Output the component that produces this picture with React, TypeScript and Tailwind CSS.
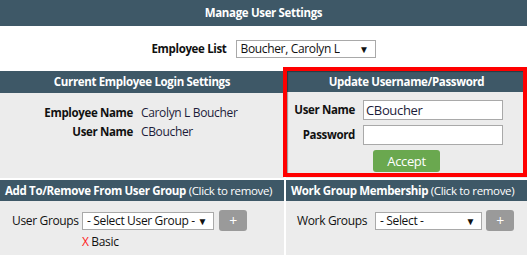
import { useState } from "react";

function FakeSelect({ value, width }: { value: string; width: string }) {
  return (
    <div
      className={`${width} h-[18px] bg-white border border-[#a9a9a9] flex items-center justify-between pl-[4px] pr-[6px] text-[12px] text-[#111]`}
    >
      <span className="truncate">{value}</span>
      <span className="text-[10px] leading-none">▼</span>
    </div>
  );
}

function PlusButton() {
  return (
    <button className="w-[28px] h-[21px] rounded-[3px] bg-[#9a9a9a] text-white text-[14px] leading-none flex items-center justify-center">
      +
    </button>
  );
}

export default function App() {
  const [userName, setUserName] = useState("CBoucher");
  const [password, setPassword] = useState("");

  return (
    <div className="w-[527px] h-[255px] overflow-hidden bg-white font-['Open_Sans',sans-serif] text-[11.5px] text-[#111] tracking-[-0.03em]">
      {/* Page title */}
      <div className="h-[26px] bg-[#3e5867] flex items-center justify-center text-white font-bold">
        Manage User Settings
      </div>

      {/* Employee picker */}
      <div className="h-[45px] flex items-start justify-center gap-[9px] pt-[14px]">
        <span className="font-bold leading-[18px]">Employee List</span>
        <FakeSelect value="Boucher, Carolyn L" width="w-[140px]" />
      </div>

      <div className="grid grid-cols-[284px_1fr] grid-rows-[107px_1fr] gap-[2px]">
        {/* Current login */}
        <div className="bg-[#ececec]">
          <div className="h-[22px] bg-[#3e5867] flex items-center justify-center text-white font-bold">
            Current Employee Login Settings
          </div>
          <div className="grid grid-cols-[133px_1fr] gap-x-[8px] pt-[10px] leading-[19px]">
            <span className="font-bold text-right">Employee Name</span>
            <span className="text-[12px] text-[#1c1c3a]">Carolyn L Boucher</span>
            <span className="font-bold text-right">User Name</span>
            <span className="text-[12px] text-[#1c1c3a]">CBoucher</span>
          </div>
        </div>

        {/* Update username / password */}
        <div className="relative bg-[#ececec]">
          <div className="h-[21px] bg-[#3e5867] flex items-center justify-center text-white font-bold">
            Update Username/Password
          </div>
          <div className="flex flex-col pt-[8px]">
            <div className="flex items-center">
              <span className="w-[69px] text-right font-bold">User Name</span>
              <input
                value={userName}
                onChange={(e) => setUserName(e.target.value)}
                className="ml-[8px] w-[140px] h-[20px] bg-white border border-[#a9a9a9] px-[2px] text-[13px] text-[#1c1c3a] outline-none"
              />
            </div>
            <div className="flex items-center mt-[5px]">
              <span className="w-[69px] text-right font-bold">Password</span>
              <input
                type="password"
                value={password}
                onChange={(e) => setPassword(e.target.value)}
                className="ml-[8px] w-[140px] h-[20px] bg-white border border-[#a9a9a9] px-[2px] text-[13px] outline-none"
              />
            </div>
            <div className="flex justify-center mt-[5px]">
              <button className="w-[67px] h-[22px] rounded-[3px] bg-[#6aa84f] text-white text-[13px] leading-none">
                Accept
              </button>
            </div>
          </div>
          {/* highlight annotation */}
          <div className="pointer-events-none absolute left-[-3px] top-[-4px] right-0 bottom-[1px] border-4 border-[#ff0000] shadow-[inset_1px_1px_1px_rgba(0,0,0,0.35)]" />
        </div>

        {/* User groups */}
        <div className="bg-[#ececec] h-[80px]">
          <div className="h-[21px] bg-[#3e5867] flex items-center pl-[5px] text-white whitespace-nowrap">
            <span className="font-bold">Add To/Remove From User Group</span>
            <span>&nbsp;(Click to remove)</span>
          </div>
          <div className="flex items-center pt-[9px] pl-[12px]">
            <span className="w-[70px] text-[12px]">User Groups</span>
            <FakeSelect value="- Select User Group -" width="w-[132px]" />
            <div className="ml-[5px]">
              <PlusButton />
            </div>
          </div>
          <div className="pl-[82px] pt-[2px] leading-[18px] text-[12px]">
            <span className="text-[#ff1a1a]">X</span> Basic
          </div>
        </div>

        {/* Work groups */}
        <div className="bg-[#ececec] h-[80px]">
          <div className="h-[21px] bg-[#3e5867] flex items-center pl-[5px] text-white whitespace-nowrap">
            <span className="font-bold">Work Group Membership</span>
            <span>&nbsp;(Click to remove)</span>
          </div>
          <div className="flex items-center pt-[9px] pl-[11px]">
            <span className="w-[78px] text-[12px]">Work Groups</span>
            <FakeSelect value="- Select -" width="w-[107px]" />
            <div className="ml-[4px]">
              <PlusButton />
            </div>
          </div>
        </div>
      </div>
    </div>
  );
}
